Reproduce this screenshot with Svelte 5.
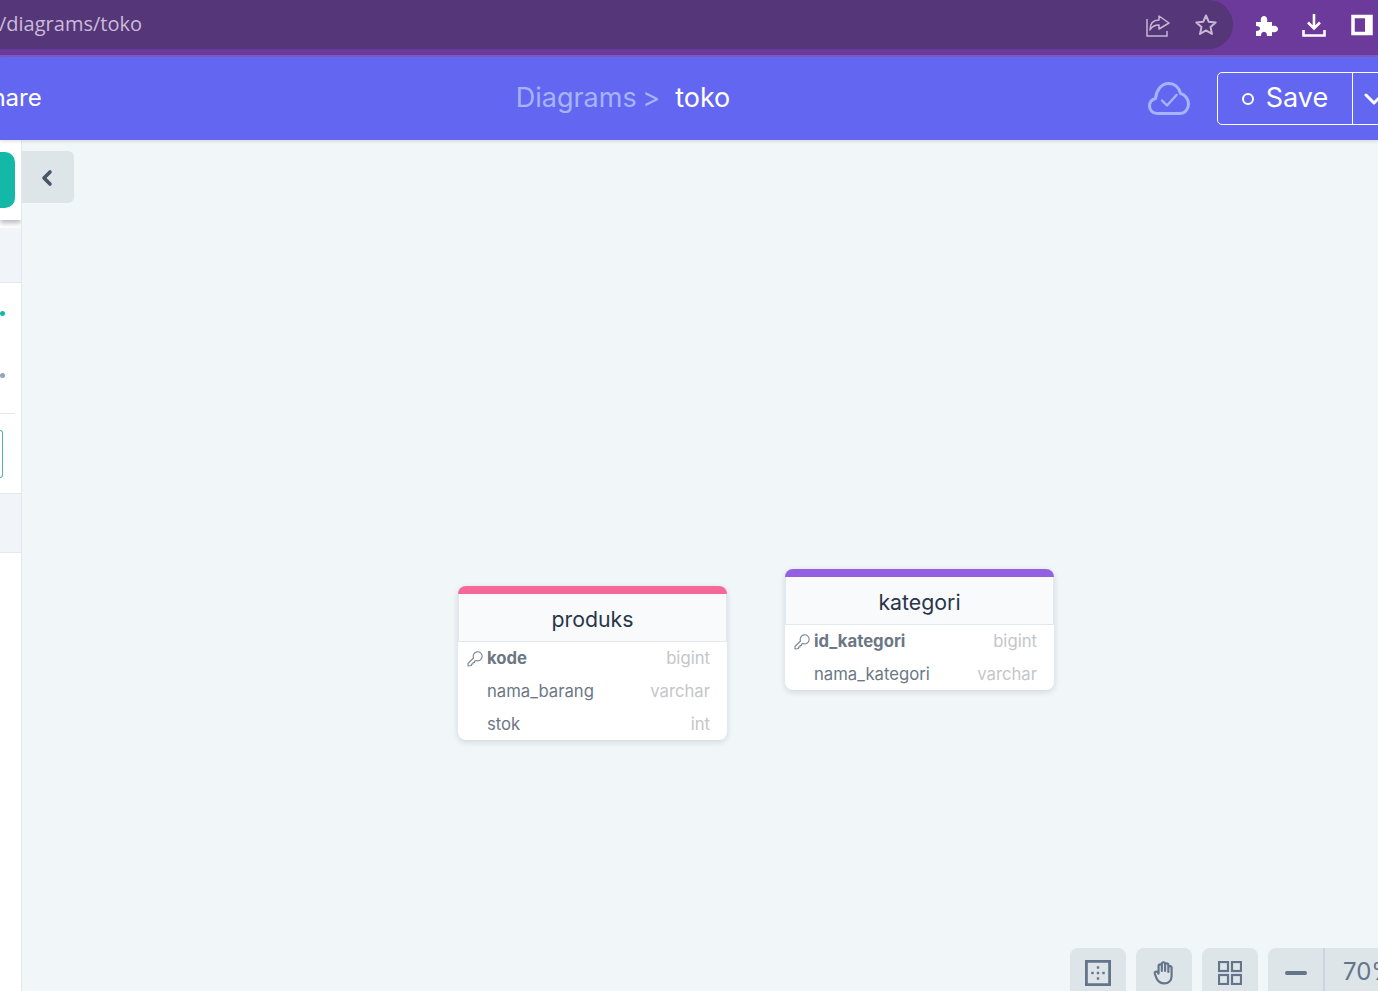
<script>
  const tables = [
    {
      name: 'produks', color: '#f5689a', x: 458, y: 586 - 140,
      fields: [
        { name: 'kode', type: 'bigint', key: true },
        { name: 'nama_barang', type: 'varchar' },
        { name: 'stok', type: 'int' }
      ]
    },
    {
      name: 'kategori', color: '#9460df', x: 785, y: 569 - 140,
      fields: [
        { name: 'id_kategori', type: 'bigint', key: true },
        { name: 'nama_kategori', type: 'varchar' }
      ]
    }
  ];
</script>

<div class="page">
  <div class="chrome">
    <div class="url">
      <span class="address">/diagrams/toko</span>
      <svg class="pill-icon" viewBox="0 0 24 24" width="24" height="24" fill="none" stroke="currentColor" stroke-width="1.5">
        <path d="M1 6v17h20v-5" />
        <path d="M13 3l10 7-10 6v-4c-4 0-7 1-9 5 0-6 3-10 9-10z" stroke-linejoin="round" />
      </svg>
      <svg class="pill-icon" viewBox="0 0 24 24" width="24" height="24" fill="none" stroke="currentColor" stroke-width="2">
        <path d="M12 2.500l2.800 6.300 6.900.7-5.200 4.600 1.500 6.800-6-3.500-6 3.500 1.500-6.800-5.200-4.600 6.900-.7z" stroke-linejoin="round" />
      </svg>
    </div>
    <div class="ext">
      <svg viewBox="0 0 24 24" width="24" height="24" fill="#fff">
        <path d="M2 9h5c-1-4 1-6 3-6s4 2 3 6h5v4c4-1 6 1 6 3s-2 4-6 3v4h-5c0-4-2-4-3-4s-3 0-3 4H2v-5c3 0 4-1 4-2.500S5 13 2 13z" />
      </svg>
      <svg viewBox="0 0 24 24" width="24" height="24" fill="none" stroke="#fff" stroke-width="2.600">
        <path d="M12 1v14M6 9.500l6 6 6-6" />
        <path d="M1.500 17v5.500h21V17" />
      </svg>
      <svg viewBox="0 0 24 24" width="24" height="24" fill="none" stroke="#fff" stroke-width="3.500">
        <rect x="3" y="3.500" width="18" height="17" />
        <path d="M18 3v18" stroke-width="6" />
      </svg>
    </div>
  </div>

  <header class="topbar">
    <button class="share">Share</button>
    <div class="crumbs">
      <span class="muted">Diagrams &gt;</span>
      <span class="current">toko</span>
    </div>
    <div class="actions">
      <svg class="cloud" viewBox="0 0 42 33" width="42" height="33" fill="none" stroke="#a5b4fc" stroke-width="3" stroke-linecap="round" stroke-linejoin="round">
        <path d="M9 31.500C4.500 31.500 1.500 28 1.500 24c0-3.500 2.500-6.500 6-7.500C8.500 8 13.500 1.500 20.500 1.500c6 0 10.500 4 12 10 4.500 1 8 5.500 8 10.500 0 5.500-3.500 9.500-9 9.500z" />
        <path d="M14 18.500l5 5 9.500-10.500" stroke-width="2.400" />
      </svg>
      <div class="save-group">
        <button class="save"><i class="ring"></i>Save</button>
        <button class="caret" aria-label="More">
          <svg viewBox="0 0 24 24" width="24" height="24" fill="none" stroke="#fff" stroke-width="3" stroke-linecap="round" stroke-linejoin="round">
            <path d="M4 8l8 8 8-8" />
          </svg>
        </button>
      </div>
    </div>
  </header>

  <main class="workspace">
    <aside class="sidebar">
      <div class="tabs"><div class="add"></div></div>
      <div class="band"></div>
      <div class="dots">
        <i class="dot green"></i>
        <i class="dot grey"></i>
      </div>
      <div class="box-row"><div class="box"></div></div>
      <div class="band second"></div>
    </aside>

    <section class="canvas">
      <button class="collapse" aria-label="Collapse">
        <svg viewBox="0 0 24 24" width="24" height="24" fill="none" stroke="#475569" stroke-width="3.600" stroke-linecap="round" stroke-linejoin="round">
          <path d="M15 6l-6 6 6 6" />
        </svg>
      </button>

      {#each tables as table}
        <div class="table" style="left: {table.x}px; top: {table.y}px; border-top-color: {table.color}">
          <div class="title">{table.name}</div>
          {#each table.fields as field}
            <div class="field">
              <span class="key">
                {#if field.key}
                  <svg viewBox="0 0 16 16" width="16" height="16" fill="none" stroke="#7b8794" stroke-width="1.100">
                    <path d="M1 15v-2.500l5.500-5.500a4.500 4.500 0 1 1 2.500 2.500l-1.500.5v1.500H6V13H4.500v1.500z" stroke-linejoin="round" />
                  </svg>
                {/if}
              </span>
              <span class="name" class:bold={field.key}>{field.name}</span>
              <span class="type">{field.type}</span>
            </div>
          {/each}
        </div>
      {/each}

      <div class="tools">
        <button class="tool" aria-label="Snap to grid">
          <svg viewBox="0 0 26 26" width="26" height="26" fill="#64748b">
            <path d="M0 0h26v26H0zM2.800 2.800v20.400h20.400V2.800z" />
            <rect x="11.800" y="6.300" width="2.400" height="2.400" /><rect x="11.800" y="11.800" width="2.400" height="2.400" /><rect x="11.800" y="17.300" width="2.400" height="2.400" />
            <rect x="6.300" y="11.800" width="2.400" height="2.400" /><rect x="17.300" y="11.800" width="2.400" height="2.400" />
          </svg>
        </button>
        <button class="tool hand" aria-label="Pan">
          <svg viewBox="0 0 24 24" width="26" height="26" fill="none" stroke="#64748b" stroke-width="2" stroke-linecap="round" stroke-linejoin="round">
            <path d="M7 13V6.500a1.500 1.500 0 0 1 3 0V11M10 11V4.500a1.500 1.500 0 0 1 3 0V11M13 11V5.500a1.500 1.500 0 0 1 3 0V12M16 12V8a1.500 1.500 0 0 1 3 0v8c0 4-3 6.500-6.500 6.500S6.500 21 5 17.500L3.500 13.500c-.5-1.500 1.500-2.500 2.500-1.500L7 13.500" />
          </svg>
        </button>
        <button class="tool" aria-label="Layout">
          <svg viewBox="0 0 24 24" width="24" height="24" fill="none" stroke="#64748b" stroke-width="2.200">
            <rect x="1" y="1" width="9" height="9" /><rect x="14" y="1" width="9" height="9" />
            <rect x="1" y="14" width="9" height="9" /><rect x="14" y="14" width="9" height="9" />
          </svg>
        </button>
        <div class="zoom">
          <button class="minus" aria-label="Zoom out"><i></i></button>
          <span class="level">70%</span>
        </div>
      </div>
    </section>
  </main>
</div>

<style>
  :global(body) {
    margin: 0;
    overflow: hidden;
  }

  .page {
    width: 1378px;
    height: 991px;
    display: flex;
    flex-direction: column;
    overflow: hidden;
    font-family: Inter, "Liberation Sans", sans-serif;
    background: #f1f6f9;
  }

  button {
    font-family: inherit;
    padding: 0;
    border: none;
    background: none;
    color: inherit;
  }

  /* browser bar */
  .chrome {
    height: 55px;
    flex: none;
    display: flex;
    align-items: flex-start;
    background: #6c3a9b;
    border-bottom: 2px solid #7c5bc4;
  }

  .url {
    width: 1233px;
    height: 49px;
    box-sizing: border-box;
    flex: none;
    display: flex;
    align-items: center;
    gap: 24px;
    padding-right: 15px;
    background: #553678;
    border-radius: 0 25px 25px 0;
    color: #c5b7d6;
  }

  .address {
    margin-left: -1px;
    margin-right: auto;
    padding-bottom: 2px;
    font-family: "Open Sans", sans-serif;
    font-size: 20px;
    color: #cabcd9;
  }

  .ext {
    height: 49px;
    display: flex;
    align-items: center;
    gap: 24px;
    margin-left: 21px;
  }

  /* top bar */
  .topbar {
    height: 83px;
    flex: none;
    position: relative;
    z-index: 2;
    display: flex;
    align-items: center;
    background: #6366f1;
    color: #fff;
    box-shadow: 0 1px 4px rgba(15, 23, 42, 0.15);
  }

  .share {
    margin-left: -24px;
    padding-bottom: 2px;
    font-size: 24px;
    color: #fff;
  }

  .crumbs {
    margin-left: 474px;
    padding-bottom: 2px;
    display: flex;
    gap: 15px;
    font-size: 27px;
  }

  .muted {
    color: #a5b4fc;
    word-spacing: -2px;
  }

  .actions {
    margin-left: auto;
    display: flex;
    align-items: center;
    gap: 27px;
    margin-right: -38px;
  }

  .save-group {
    display: flex;
    height: 53px;
    box-sizing: border-box;
    border: 1px solid #fff;
    border-radius: 5px;
  }

  .save {
    width: 135px;
    display: flex;
    align-items: center;
    justify-content: center;
    gap: 12px;
    padding-bottom: 2px;
    font-size: 27px;
    border-right: 1px solid #fff;
  }

  .ring {
    width: 8px;
    height: 8px;
    margin-top: 2px;
    border: 2px solid #fff;
    border-radius: 50%;
  }

  .caret {
    width: 62px;
    display: flex;
    align-items: center;
    padding-left: 9px;
  }

  /* left panel */
  .workspace {
    flex: 1;
    min-height: 0;
    display: flex;
  }

  .sidebar {
    width: 22px;
    flex: none;
    box-sizing: border-box;
    display: flex;
    flex-direction: column;
    overflow: hidden;
    background: #fff;
    border-right: 1px solid #e2e8f0;
  }

  .tabs {
    height: 80px;
    flex: none;
    box-sizing: border-box;
    padding-top: 12px;
    box-shadow: 0 3px 5px rgba(15, 23, 42, 0.3);
  }

  .add {
    width: 15px;
    height: 56px;
    background: #14b8a6;
    border-radius: 0 10px 10px 0;
  }

  .band {
    height: 55px;
    flex: none;
    margin-top: 8px;
    background: #f1f5f9;
    border-bottom: 1px solid #e2e8f0;
    box-sizing: border-box;
  }

  .dots {
    height: 131px;
    flex: none;
    position: relative;
    box-sizing: border-box;
    display: flex;
    flex-direction: column;
    gap: 57px;
    padding-top: 28px;
  }

  .dots::after {
    content: "";
    position: absolute;
    left: 0;
    bottom: 0;
    width: 15px;
    height: 1px;
    background: #e2e8f0;
  }

  .dot {
    display: block;
    width: 5px;
    height: 5px;
    border-radius: 50%;
  }

  .green {
    background: #14b8a6;
  }

  .grey {
    background: #94a3b8;
  }

  .box-row {
    height: 79px;
    flex: none;
    box-sizing: border-box;
    padding-top: 16px;
  }

  .box {
    width: 3px;
    height: 48px;
    box-sizing: border-box;
    border: 1px solid #4fb5a8;
    border-left: none;
    border-radius: 0 5px 5px 0;
  }

  .band.second {
    height: 60px;
    margin-top: 0;
    border-top: 1px solid #e2e8f0;
  }

  /* canvas */
  .canvas {
    flex: 1;
    position: relative;
    overflow: hidden;
    background: #f1f6f9;
  }

  .collapse {
    position: absolute;
    left: 0;
    top: 11px;
    width: 52px;
    height: 52px;
    display: flex;
    align-items: center;
    justify-content: center;
    padding: 2px 3px 0 0;
    box-sizing: border-box;
    background: #dde5e9;
    border-radius: 0 6px 6px 0;
  }

  .table {
    position: absolute;
    margin-left: -22px;
    width: 269px;
    box-sizing: border-box;
    background: #fff;
    border-top: 8px solid;
    border-radius: 8px;
    box-shadow: 0 2px 6px rgba(15, 23, 42, 0.14);
  }

  .title {
    height: 48px;
    box-sizing: border-box;
    display: flex;
    align-items: center;
    justify-content: center;
    padding-top: 2px;
    font-size: 21.3px;
    color: #293548;
    background: #f8fafc;
    border: 1px solid #e2e8f0;
    border-width: 0 1px 1px;
  }

  .field {
    height: 32.67px;
    display: flex;
    align-items: center;
    padding: 0 17px 0 9px;
    font-size: 16.7px;
    color: #6b7785;
  }

  .key {
    width: 20px;
    height: 16px;
    flex: none;
    padding-top: 1px;
  }

  .name.bold {
    font-weight: 700;
  }

  .type {
    margin-left: auto;
    color: #c4c6c9;
  }

  /* bottom toolbar */
  .tools {
    position: absolute;
    left: 1048px;
    top: 808px;
    display: flex;
    gap: 10px;
  }

  .tool {
    width: 56px;
    height: 56px;
    display: flex;
    align-items: center;
    justify-content: center;
    padding-bottom: 6px;
    box-sizing: border-box;
    background: #dde5e9;
    border-radius: 8px;
  }

  .tool.hand {
    padding-bottom: 8px;
  }

  .zoom {
    display: flex;
    height: 56px;
    border-radius: 8px;
    overflow: hidden;
    background: #dde5e9;
  }

  .minus {
    width: 57px;
    display: flex;
    align-items: center;
    justify-content: center;
    padding: 0 0 6px 0;
    box-sizing: border-box;
    border-right: 2px solid #cbd5e1;
  }

  .minus i {
    display: block;
    width: 22px;
    height: 4px;
    border-radius: 2px;
    background: #64748b;
  }

  .level {
    padding: 9px 20px 0 18px;
    font-size: 24px;
    color: #64748b;
  }
</style>
